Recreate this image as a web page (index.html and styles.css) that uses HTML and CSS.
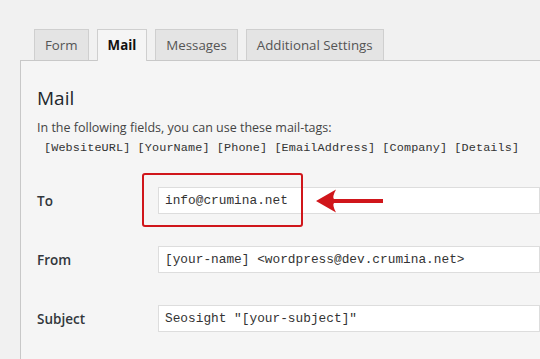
FILE: index.html
```
<!DOCTYPE html>
<html>
<head>
    <meta charset="UTF-8">
    <title>Mail Settings</title>
    <link rel="stylesheet" href="styles.css">
</head>
<body>
    <div class="wrap">
        <div class="tabs">
            <div class="tab">Form</div>
            <div class="tab active">Mail</div>
            <div class="tab">Messages</div>
            <div class="tab">Additional Settings</div>
        </div>
        <div class="panel">
            <h2>Mail</h2>
            <p class="hint">In the following fields, you can use these mail-tags:</p>
            <p class="tags">[WebsiteURL] [YourName] [Phone] [EmailAddress] [Company] [Details]</p>

            <div class="row first">
                <label>To</label>
                <div class="field">
                    <input type="text" value="info@crumina.net">
                    <div class="highlight"></div>
                    <svg class="arrow" width="68" height="24" viewBox="0 0 68 24">
                        <path d="M0 12 L20 0.5 Q16 8 18 10 L67 10 L67 14 L18 14 Q16 16 20 23.5 Z" fill="#d0161b"/>
                    </svg>
                </div>
            </div>
            <div class="row">
                <label>From</label>
                <div class="field">
                    <input type="text" value="[your-name] <wordpress@dev.crumina.net>">
                </div>
            </div>
            <div class="row">
                <label>Subject</label>
                <div class="field">
                    <input type="text" value='Seosight "[your-subject]"'>
                </div>
            </div>
        </div>
    </div>
</body>
</html>
```

FILE: styles.css
```
body {
    margin: 0;
    background-color: #f1f1f1;
    font-family: "Open Sans", sans-serif;
    color: #23282d;
    overflow: hidden;
}
.wrap {
    padding: 29px 0 0 20px;
}
.tabs {
    display: flex;
    gap: 8px;
    padding-left: 14px;
}
.tab {
    height: 30px;
    line-height: 30px;
    padding: 0 10px;
    border: 1px solid #cfcfcf;
    border-bottom: none;
    background-color: #e4e4e4;
    font-size: 13.3px;
    color: #555;
}
.tab.active {
    background-color: #f5f5f5;
    color: #111;
    font-weight: bold;
    height: 31px;
    margin-bottom: -1px;
    position: relative;
}
.panel {
    border-top: 1px solid #c8c8c8;
    border-left: 1px solid #c8c8c8;
    background-color: #f5f5f5;
    padding: 0 0 40px 16px;
}
h2 {
    margin: 0;
    padding-top: 24px;
    font-size: 19px;
    font-weight: normal;
    line-height: 26px;
}
.hint {
    margin: 8px 0 0;
    font-size: 12.5px;
    line-height: 18px;
    color: #444;
}
.tags {
    margin: 3px 0 0 7px;
    font-family: "Liberation Mono", monospace;
    font-size: 11.8px;
    letter-spacing: 0.12px;
    line-height: 16px;
    color: #333;
    white-space: nowrap;
}
.row {
    display: flex;
    align-items: center;
    margin-top: 32px;
}
.row.first {
    margin-top: 31px;
}
label {
    width: 121px;
    font-size: 13.5px;
    font-weight: 600;
    color: #32373c;
}
.field {
    position: relative;
    flex: 1;
}
input {
    display: block;
    box-sizing: border-box;
    width: 100%;
    height: 27px;
    padding: 0 6px;
    border: 1px solid #ddd;
    background: #fff;
    font-family: "Liberation Mono", monospace;
    font-size: 12.8px;
    color: #333;
}
.highlight {
    position: absolute;
    left: -16px;
    top: -14px;
    width: 157px;
    height: 50px;
    border: 2px solid #d0161b;
    border-radius: 3px;
}
.arrow {
    position: absolute;
    left: 158px;
    top: 2px;
}
```
